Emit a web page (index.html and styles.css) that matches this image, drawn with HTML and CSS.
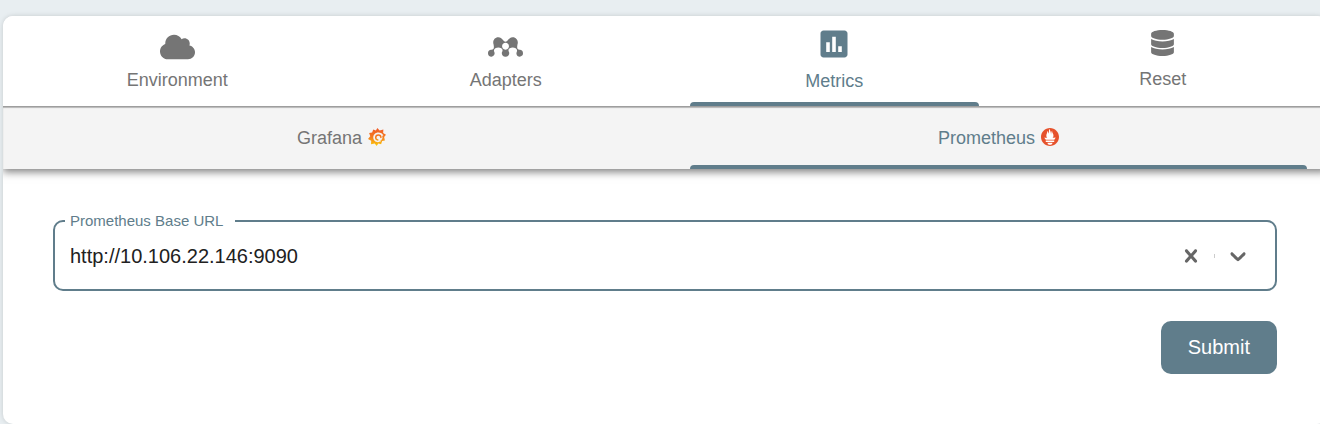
FILE: index.html
```html
<!DOCTYPE html>
<html lang="en">
<head>
  <meta charset="utf-8">
  <title>Settings - Metrics</title>
  <link rel="stylesheet" href="styles.css">
</head>
<body>
  <main class="card">
    <nav class="tabs" role="tablist" aria-label="Settings">
      <button class="tab" type="button" role="tab" aria-selected="false">
        <svg class="tab-icon icon-wide" viewBox="0 0 640 512" aria-hidden="true"><path d="M537.6 226.6c4.1-10.7 6.4-22.4 6.4-34.6 0-53-43-96-96-96-19.7 0-38.1 6-53.3 16.2C367 64.2 315.3 32 256 32c-88.4 0-160 71.6-160 160 0 2.7.1 5.4.2 8.1C40.2 219.8 0 273.2 0 336c0 79.5 64.5 144 144 144h368c70.7 0 128-57.3 128-128 0-61.9-44-113.6-102.4-125.4z"/></svg>
        <span>Environment</span>
      </button>
      <button class="tab" type="button" role="tab" aria-selected="false">
        <svg class="tab-icon icon-wide" viewBox="0 0 640 512" aria-hidden="true"><path d="M624.6 325.2c-12.3-12.4-29.7-19.2-48.4-17.2-43.3-1-49.7-34.9-37.5-98.8 22.8-57.5-14.9-131.5-87.4-130.8-77.4.7-81.7 82-130.9 82-48.1 0-54-81.3-130.9-82-72.9-.8-110.1 73.3-87.4 130.8 12.2 63.9 5.8 97.8-37.5 98.8-21.2-2.3-37 6.5-53 22.5-19.9 19.7-19.3 94.8 42.6 102.6 47.1 5.9 81.6-42.9 61.2-87.8-47.3-103.7 185.9-106.1 146.5-8.2-.1.1-.2.2-.3.4-26.8 42.8 6.8 97.4 58.8 95.2 52.1 2.1 85.4-52.6 58.8-95.2-.1-.2-.2-.3-.3-.4-39.4-97.9 193.8-95.5 146.5 8.2-4.6 10-6.7 21.3-5.7 33 4.9 53.4 68.7 74.1 104.9 35.2 17.8-14.8 23.1-65.6 0-88.3zm-303.9-19.1h-.6c-43.4 0-62.8-37.5-62.8-62.8 0-34.7 28.2-62.8 62.8-62.8h.6c34.7 0 62.8 28.1 62.8 62.8 0 25-19.2 62.8-62.8 62.8z"/></svg>
        <span>Adapters</span>
      </button>
      <button class="tab selected" type="button" role="tab" aria-selected="true">
        <svg class="tab-icon icon-chart" viewBox="0 0 24 24" aria-hidden="true"><path d="M19 3H5c-1.1 0-2 .9-2 2v14c0 1.1.9 2 2 2h14c1.1 0 2-.9 2-2V5c0-1.1-.9-2-2-2zM9.2 17.3H6.8v-6.4h2.4zM13.2 17.3h-2.4V7.2h2.4zM17.2 17.3h-2.4v-3.8h2.4z"/></svg>
        <span>Metrics</span>
      </button>
      <button class="tab" type="button" role="tab" aria-selected="false">
        <svg class="tab-icon icon-database" viewBox="0 0 448 512" aria-hidden="true"><path d="M448 73.143v45.714C448 159.143 347.667 192 224 192S0 159.143 0 118.857V73.143C0 32.857 100.333 0 224 0s224 32.857 224 73.143zM448 176v102.857C448 319.143 347.667 352 224 352S0 319.143 0 278.857V176c48.125 33.143 136.208 48.572 224 48.572S399.874 209.143 448 176zm0 160v102.857C448 479.143 347.667 512 224 512S0 479.143 0 438.857V336c48.125 33.143 136.208 48.572 224 48.572S399.874 369.143 448 336z"/></svg>
        <span>Reset</span>
      </button>
    </nav>

    <nav class="tabs subtabs" role="tablist" aria-label="Metrics source">
      <button class="tab subtab" type="button" role="tab" aria-selected="false">
        <span>Grafana</span>
        <svg class="brand-icon" viewBox="0 0 24 24" aria-hidden="true">
          <defs><linearGradient id="flame" gradientUnits="userSpaceOnUse" x1="0" y1="0" x2="0" y2="24"><stop offset="0" stop-color="#f05a28"/><stop offset="0.5" stop-color="#f47b20"/><stop offset="1" stop-color="#fbca0a"/></linearGradient></defs>
          <path fill="url(#flame)" d="M12.500 0l3 3.200 5-1.200-.3 4.500L24 9l-2.500 3 1 4.500-3.700.7-1.300 4.300-3.700-.8L11.500 24l-2.500-3.200-5 .7.300-4.500L0 14.500l3-3.500-1.500-4.500 4-.5L7 2l3.500 1.200z"/>
          <path fill="#f4f4f4" d="M20.500 10.200C19.600 7.500 16.800 6 13.800 6 9.800 6 7 9 7 12.800c0 3.600 2.900 6.200 6.300 6.200 1.900 0 3.700-.8 4.800-2.200-1.200.6-2.400.8-3.500.7 2.900-.5 4.700-2.300 4.700-4.800 0-.9-.2-1.700-.6-2.400z"/>
          <path fill="none" stroke="url(#flame)" stroke-width="2" stroke-linecap="round" d="M17.200 12.700c0-2-1.500-3.400-3.400-3.400s-3.500 1.600-3.500 3.500c0 1.700 1.200 3 2.800 3.200"/>
        </svg>
      </button>
      <button class="tab subtab selected" type="button" role="tab" aria-selected="true">
        <span>Prometheus</span>
        <svg class="brand-icon" viewBox="0 0 24 24" aria-hidden="true"><circle cx="12" cy="12" r="11.500" fill="#fff"/><path fill="#e6522c" d="M12 0C5.373 0 0 5.372 0 12c0 6.627 5.373 12 12 12s12-5.373 12-12c0-6.628-5.373-12-12-12zm0 22.460c-1.885 0-3.414-1.260-3.414-2.814h6.828c0 1.553-1.528 2.813-3.414 2.813zm5.640-3.745H6.360v-2.046h11.280v2.046zm-.04-3.098H6.391c-.037-.043-.075-.086-.111-.13-1.155-1.401-1.427-2.133-1.690-2.879-.005-.025 1.400.287 2.395.511 0 0 .513.119 1.262.255-.72-.843-1.147-1.915-1.147-3.010 0-2.406 1.845-4.508 1.180-6.207.648.053 1.340 1.367 1.387 3.422.689-.951.977-2.690.977-3.755 0-1.103.727-2.385 1.454-2.429-.648 1.069.168 1.984.894 4.256.272.854.237 2.290.447 3.201.07-1.892.395-4.652 1.595-5.605-.529 1.200.079 2.702.494 3.424.671 1.164 1.078 2.047 1.078 3.716a4.642 4.642 0 01-1.110 2.996c.792-.149 1.340-.283 1.340-.283l2.573-.502s-.374 1.538-1.810 3.019z"/></svg>
      </button>
    </nav>

    <form class="form">
      <fieldset class="field">
        <legend class="field-legend"><label for="base-url">Prometheus Base URL</label></legend>
        <div class="field-row">
          <input class="field-input" id="base-url" type="text" value="http://10.106.22.146:9090">
          <button class="field-button" type="button" aria-label="Clear">
            <svg viewBox="0 0 20 20" aria-hidden="true"><path d="M14.348 14.849c-0.469 0.469-1.229 0.469-1.697 0l-2.651-3.030-2.651 3.029c-0.469 0.469-1.229 0.469-1.697 0-0.469-0.469-0.469-1.229 0-1.697l2.758-3.150-2.759-3.152c-0.469-0.469-0.469-1.228 0-1.697s1.228-0.469 1.697 0l2.652 3.031 2.651-3.031c0.469-0.469 1.228-0.469 1.697 0s0.469 1.229 0 1.697l-2.758 3.152 2.758 3.150c0.469 0.469 0.469 1.229 0 1.698z"/></svg>
          </button>
          <span class="separator"></span>
          <button class="field-button" type="button" aria-label="Show options">
            <svg viewBox="0 0 20 20" aria-hidden="true"><path d="M4.516 7.548c0.436-0.446 1.043-0.481 1.576 0l3.908 3.747 3.908-3.747c0.533-0.481 1.141-0.446 1.574 0 0.436 0.445 0.408 1.197 0 1.615-0.406 0.418-4.695 4.502-4.695 4.502-0.217 0.223-0.502 0.335-0.787 0.335s-0.570-0.112-0.789-0.335c0 0-4.287-4.084-4.695-4.502s-0.436-1.170 0-1.615z"/></svg>
          </button>
        </div>
      </fieldset>
      <button class="submit" type="submit">Submit</button>
    </form>
  </main>
</body>
</html>
```

FILE: styles.css
```css
* {
  box-sizing: border-box;
}

body {
  margin: 0;
  padding: 16px 0 0 3px;
  overflow: hidden;
  background: #e8eef1;
  font-family: "Liberation Sans", Arial, sans-serif;
}

button,
input {
  font-family: inherit;
}

.card {
  margin-right: -7px;
  border-radius: 10px;
  background: #fff;
  box-shadow: 0 0 5px rgba(0, 0, 0, 0.15);
}

.tabs {
  display: flex;
  padding-left: 10px;
  border-radius: 10px 10px 0 0;
  background: #fff;
}

.tab {
  position: relative;
  display: flex;
  flex: 1 1 0;
  flex-direction: column;
  align-items: center;
  height: 90px;
  padding: 0;
  border: 0;
  background: none;
  color: #757575;
  font-size: 18px;
  line-height: 22px;
}

.tab.selected {
  color: #607d8b;
}

.tab.selected::after {
  content: "";
  position: absolute;
  right: 20px;
  bottom: 0;
  left: 20px;
  height: 4px;
  border-radius: 4px 4px 0 0;
  background: #607d8b;
}

.tab-icon {
  fill: currentColor;
}

.icon-wide {
  width: 35px;
  height: 28px;
  margin: 17px 0 8px;
}

.icon-chart {
  width: 36px;
  height: 36px;
  margin: 10px 0 8px;
}

.icon-database {
  width: 23px;
  height: 26px;
  margin: 14px 0 12px;
}

.subtabs {
  border-top: 1px solid #9e9e9e;
  border-radius: 0;
  background: #f4f4f4;
  box-shadow: inset 0 1px 1px rgba(0, 0, 0, 0.25), 0 3px 8px rgba(0, 0, 0, 0.5);
  clip-path: inset(0 0 -16px 0);
}

.subtab {
  flex-direction: row;
  justify-content: center;
  gap: 6px;
  height: 62px;
}

.brand-icon {
  width: 18px;
  height: 18px;
  margin-bottom: 2px;
}

.form {
  display: flex;
  flex-direction: column;
  gap: 30px;
  padding: 43px 50px 50px;
}

.field {
  min-width: 0;
  margin: 0;
  padding: 0 24px 0 10px;
  border: 2px solid #607d8b;
  border-radius: 10px;
}

.field-legend {
  padding: 0 12px 0 5px;
  color: #607d8b;
  font-size: 15px;
  line-height: 18px;
}

.field-row {
  display: flex;
  align-items: center;
  height: 59px;
  padding-bottom: 8px;
}

.field-input {
  flex: 1;
  min-width: 0;
  padding: 0 5px;
  border: 0;
  outline: 0;
  background: transparent;
  color: #212121;
  font-size: 20px;
  line-height: 24px;
}

.field-button {
  display: flex;
  padding: 0;
  border: 0;
  background: none;
}

.field-button svg {
  width: 26px;
  height: 26px;
  fill: #666;
}

.separator {
  width: 1px;
  height: 4px;
  margin: 0 10px;
  background: #ccc;
}

.submit {
  align-self: flex-end;
  height: 53px;
  padding: 0 27px 2px;
  border: 0;
  border-radius: 10px;
  background: #607d8b;
  color: #fff;
  font-size: 20px;
  line-height: 24px;
}
```
